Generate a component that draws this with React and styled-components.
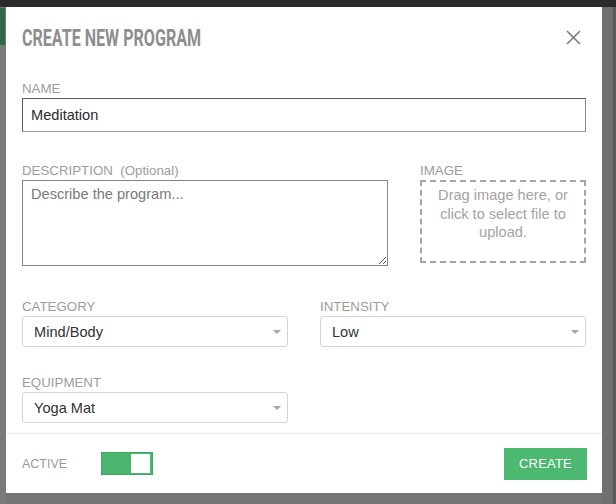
import React from 'react'
import styled, { createGlobalStyle } from 'styled-components'

const GlobalStyle = createGlobalStyle`
  html, body {
    margin: 0;
    padding: 0;
    background: #737373;
  }
  * { box-sizing: border-box; }
`;

const Page = styled.div`
  width: 616px;
  height: 504px;
  overflow: hidden;
  display: flex;
  flex-direction: column;
  background: #747474;
  font-family: "Liberation Sans", Arial, sans-serif;
`;

const TopBand = styled.div`
  height: 7px;
  background: #2b2b2b;
  flex-shrink: 0;
`;

const Stage = styled.div`
  display: flex;
  flex: 1;
`;

const LeftEdge = styled.div`
  width: 6px;
  padding-top: 1px;
  background: #7a7a7a;
`;

const GreenBit = styled.div`
  height: 37px;
  background: #2d6b45;
  width: 5px;
`;

const RightEdge = styled.div`
  flex: 1;
  background: #707070;
  border-right: 3px solid #5c5c5c;
`;

const Modal = styled.div`
  width: 596px;
  height: 486px;
  background: #fff;
  display: flex;
  flex-direction: column;
`;

const Header = styled.div`
  display: flex;
  align-items: flex-start;
  justify-content: space-between;
  padding: 19px 21px 0 16px;
  height: 62px;
  flex-shrink: 0;
`;

const Title = styled.h1`
  margin: 0;
  font-family: "Roboto", sans-serif;
  font-weight: 700;
  font-size: 24px;
  line-height: 24px;
  color: #8e8e8e;
  display: inline-block;
  transform: scaleX(0.67);
  transform-origin: left center;
  white-space: nowrap;
`;

const CloseButton = styled.button`
  border: none;
  background: none;
  padding: 0;
  margin-top: 4px;
  width: 15px;
  height: 15px;
  cursor: pointer;
  display: flex;
`;

const Body = styled.div`
  flex: 1;
  padding: 12px 16px 0 16px;
  display: flex;
  flex-direction: column;
`;

const Row = styled.div`
  display: grid;
  grid-template-columns: ${p => p.$cols || '1fr'};
  column-gap: 32px;
  margin-top: ${p => p.$mt || 0}px;
`;

const FieldWrap = styled.div`
  display: flex;
  flex-direction: column;
`;

const Label = styled.label`
  font-size: 13.3px;
  line-height: 16px;
  color: #9c9c9c;
  margin-bottom: 1px;
  white-space: pre;
`;

const TextInput = styled.input`
  height: 34px;
  border: 1px solid;
  border-color: #5a5a5a #8a8a8a #9a9a9a #5a5a5a;
  padding: 0 8px;
  font-family: "Liberation Sans", Arial, sans-serif;
  font-size: 14.6px;
  color: #2a2a2a;
  outline: none;
`;

const TextArea = styled.textarea`
  height: 86px;
  border: 1px solid #858585;
  padding: 5px 8px;
  font-family: "Liberation Sans", Arial, sans-serif;
  font-size: 14.6px;
  color: #333;
  resize: vertical;
  outline: none;
  &::placeholder {
    color: #7a7a7a;
  }
`;

const DropZone = styled.div`
  height: 83px;
  border: 2px dashed #a5a5a5;
  text-align: center;
  padding: 4px 8px 0;
  font-size: 14.6px;
  line-height: 18.5px;
  color: #a3a3a3;
  cursor: pointer;
`;

const SelectBox = styled.div`
  height: 31px;
  border: 1px solid #d4d4d4;
  border-radius: 3px;
  display: flex;
  align-items: center;
  justify-content: space-between;
  padding: 0 6px 0 11px;
  font-size: 14.6px;
  color: #333;
  cursor: pointer;
`;

const Caret = styled.span`
  width: 0;
  height: 0;
  border-left: 4.5px solid transparent;
  border-right: 4.5px solid transparent;
  border-top: 4.5px solid #a5a5a5;
`;

const Footer = styled.div`
  height: 60px;
  border-top: 1px solid #ececec;
  display: flex;
  align-items: center;
  justify-content: space-between;
  padding: 0 15px 0 16px;
  flex-shrink: 0;
`;

const ActiveGroup = styled.div`
  display: flex;
  align-items: center;
  gap: 34px;
`;

const FooterLabel = styled.span`
  font-size: 12.5px;
  color: #9a9a9a;
`;

const Toggle = styled.button`
  width: 52px;
  height: 23px;
  background: ${p => (p.$on ? '#4cb56d' : '#ccc')};
  border: 1px solid ${p => (p.$on ? '#43a862' : '#bbb')};
  padding: 1px 2px;
  display: flex;
  justify-content: ${p => (p.$on ? 'flex-end' : 'flex-start')};
  cursor: pointer;
`;

const Knob = styled.span`
  width: 19px;
  height: 19px;
  background: #fff;
`;

const CreateButton = styled.button`
  width: 83px;
  height: 32px;
  background: #4cb870;
  border: none;
  color: #fff;
  font-family: "Liberation Sans", Arial, sans-serif;
  font-size: 13px;
  letter-spacing: 0.2px;
  cursor: pointer;
`;

const Field = ({ label, children }) => (
  <FieldWrap>
    <Label>{label}</Label>
    {children}
  </FieldWrap>
);

const Select = ({ value }) => (
  <SelectBox>
    <span>{value}</span>
    <Caret />
  </SelectBox>
);

export default function App() {
  return (
    <Page>
      <GlobalStyle />
      <TopBand />
      <Stage>
        <LeftEdge>
          <GreenBit />
        </LeftEdge>
        <Modal>
          <Header>
            <Title>CREATE NEW PROGRAM</Title>
            <CloseButton aria-label="Close">
              <svg width="15" height="15" viewBox="0 0 15 15">
                <path d="M1 1 L14 14 M14 1 L1 14" stroke="#7a7a7a" strokeWidth="1.6" />
              </svg>
            </CloseButton>
          </Header>
          <Body>
            <Field label="NAME">
              <TextInput defaultValue="Meditation" />
            </Field>
            <Row $cols="366px 166px" $mt={31}>
              <Field label="DESCRIPTION  (Optional)">
                <TextArea placeholder="Describe the program..." />
              </Field>
              <Field label="IMAGE">
                <DropZone>Drag image here, or click to select file to upload.</DropZone>
              </Field>
            </Row>
            <Row $cols="1fr 1fr" $mt={33}>
              <Field label="CATEGORY">
                <Select value="Mind/Body" />
              </Field>
              <Field label="INTENSITY">
                <Select value="Low" />
              </Field>
            </Row>
            <Row $cols="1fr 1fr" $mt={28}>
              <Field label="EQUIPMENT">
                <Select value="Yoga Mat" />
              </Field>
            </Row>
          </Body>
          <Footer>
            <ActiveGroup>
              <FooterLabel>ACTIVE</FooterLabel>
              <Toggle $on aria-label="Active">
                <Knob />
              </Toggle>
            </ActiveGroup>
            <CreateButton>CREATE</CreateButton>
          </Footer>
        </Modal>
        <RightEdge />
      </Stage>
    </Page>
  )
}
